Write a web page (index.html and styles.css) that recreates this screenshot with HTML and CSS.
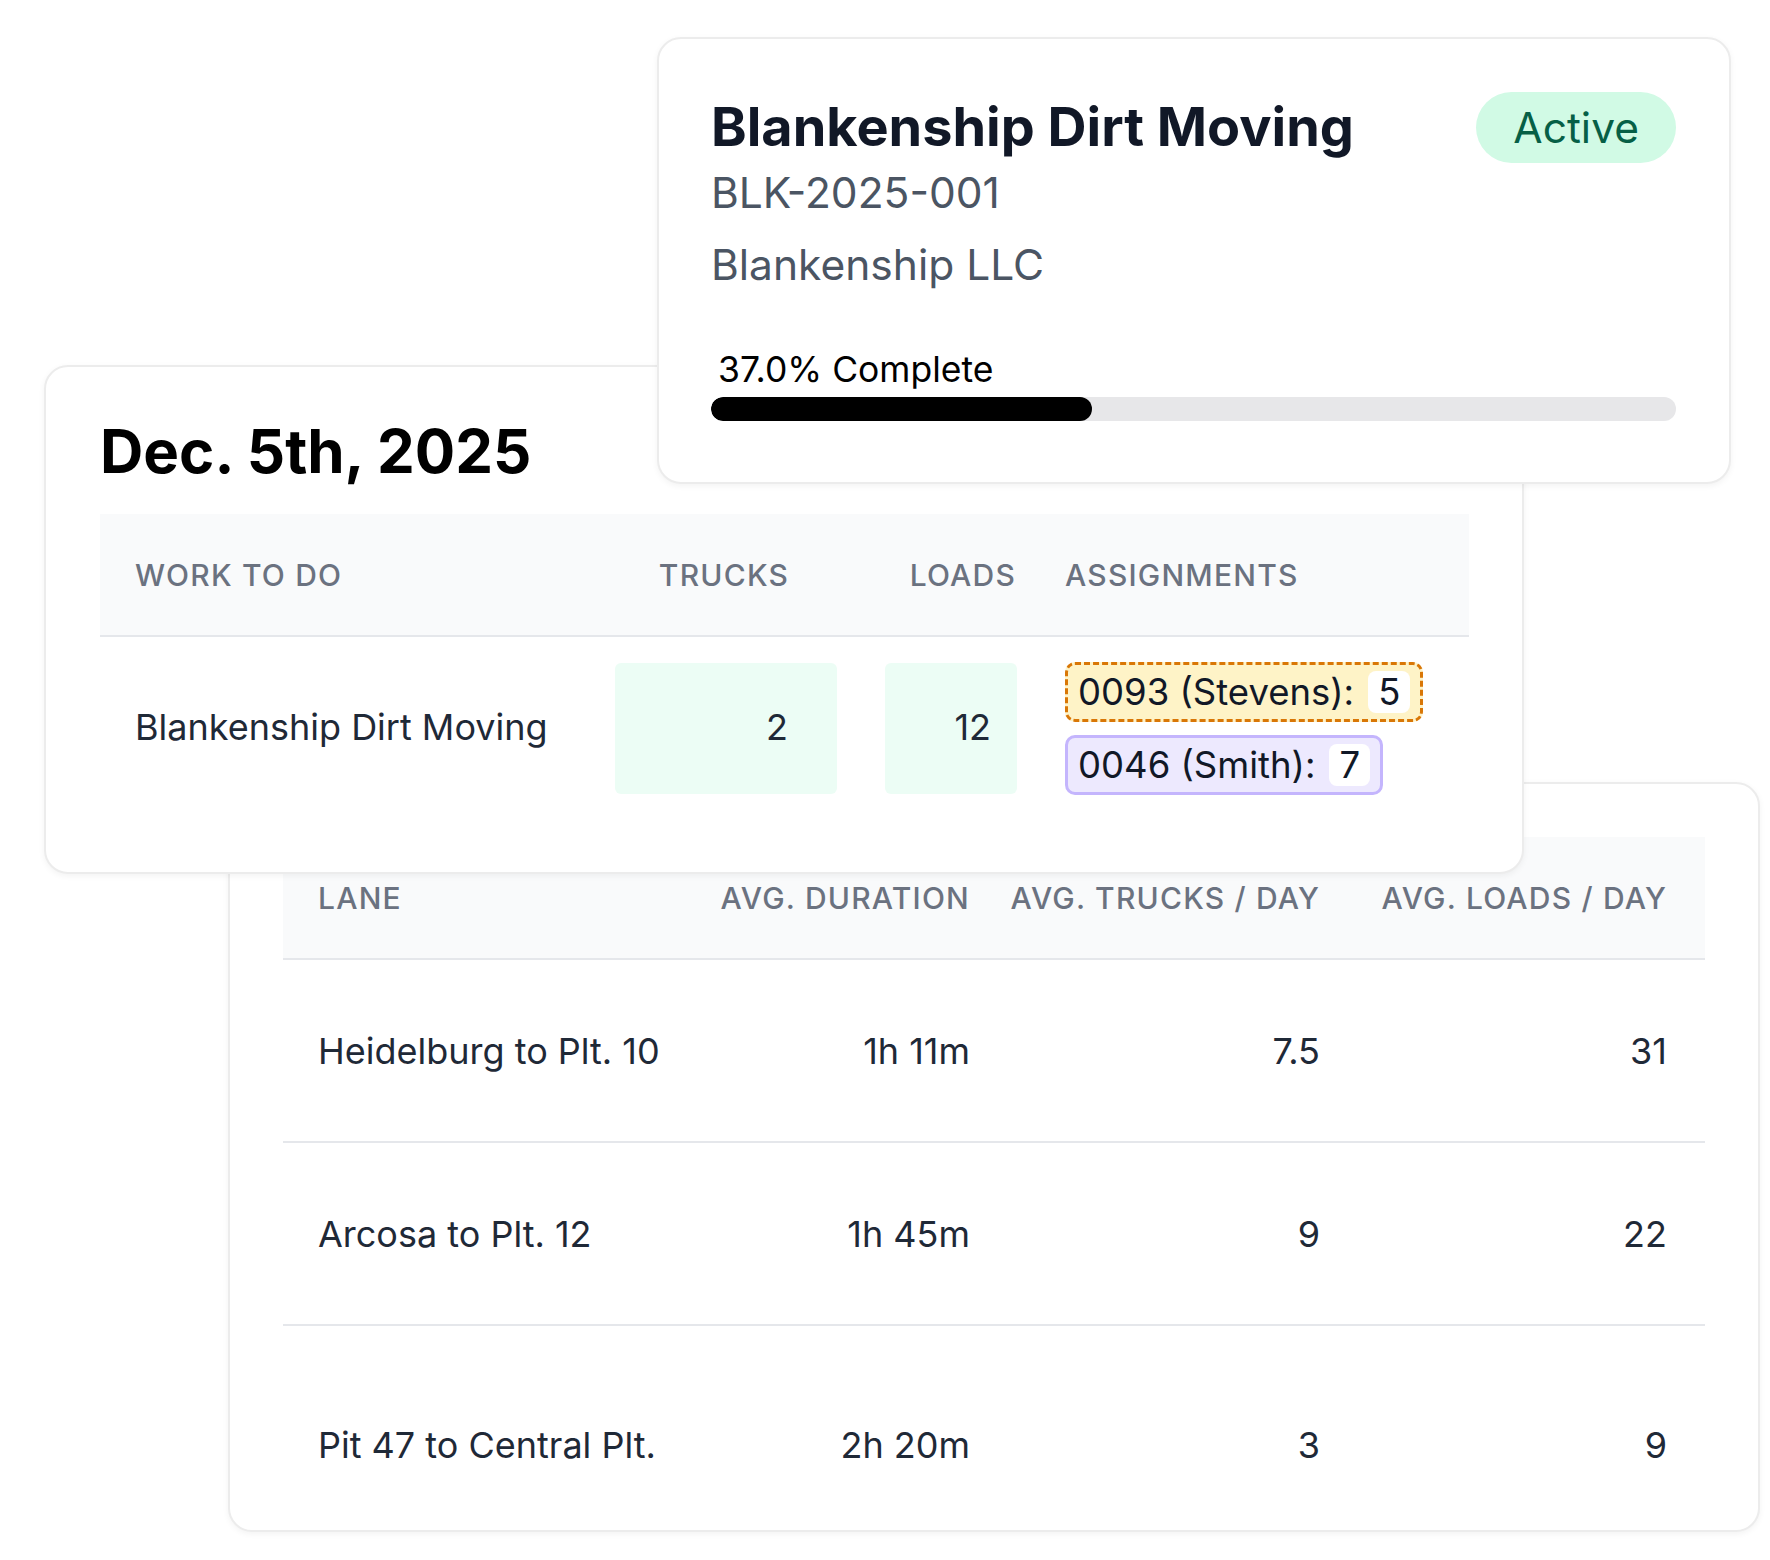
FILE: index.html
```html
<!DOCTYPE html>
<html lang="en">
<head>
<meta charset="utf-8">
<title>Blankenship Dirt Moving</title>
<link rel="stylesheet" href="styles.css">
</head>
<body>
<main class="canvas">

  <section class="card lane-card">
    <div class="lane-table">
      <div class="lane-row lane-head">
        <div class="lane-cell first">Lane</div>
        <div class="lane-cell num">Avg. Duration</div>
        <div class="lane-cell num">Avg. Trucks / Day</div>
        <div class="lane-cell num">Avg. Loads / Day</div>
      </div>
      <div class="lane-row lane-body">
        <div class="lane-cell first">Heidelburg to Plt. 10</div>
        <div class="lane-cell num">1h 11m</div>
        <div class="lane-cell num">7.5</div>
        <div class="lane-cell num">31</div>
      </div>
      <div class="lane-row lane-body">
        <div class="lane-cell first">Arcosa to Plt. 12</div>
        <div class="lane-cell num">1h 45m</div>
        <div class="lane-cell num">9</div>
        <div class="lane-cell num">22</div>
      </div>
      <div class="lane-row lane-body last">
        <div class="lane-cell first">Pit 47 to Central Plt.</div>
        <div class="lane-cell num">2h 20m</div>
        <div class="lane-cell num">3</div>
        <div class="lane-cell num">9</div>
      </div>
    </div>
  </section>

  <section class="card day-card">
    <h2 class="day-title">Dec. 5th, 2025</h2>
    <div class="work-table">
      <div class="work-head">
        <div class="wh wh-work">Work to do</div>
        <div class="wh wh-trucks">Trucks</div>
        <div class="wh wh-loads">Loads</div>
        <div class="wh wh-assign">Assignments</div>
      </div>
      <div class="work-row">
        <div class="work-name">Blankenship Dirt Moving</div>
        <div class="qty qty-trucks">2</div>
        <div class="qty qty-loads">12</div>
        <div class="assignments">
          <div class="tag tag-pending">0093 (Stevens): <span class="tag-count">5</span></div>
          <div class="tag tag-confirmed">0046 (Smith): <span class="tag-count">7</span></div>
        </div>
      </div>
    </div>
  </section>

  <section class="card job-card">
    <div class="job-head">
      <h1 class="job-title">Blankenship Dirt Moving</h1>
      <span class="badge">Active</span>
    </div>
    <div class="job-code">BLK-2025-001</div>
    <div class="job-client">Blankenship LLC</div>
    <div class="progress-label">37.0% Complete</div>
    <div class="progress-track">
      <div class="progress-fill" style="width: 39.5%"></div>
    </div>
  </section>

</main>
</body>
</html>
```

FILE: styles.css
```css
* {
  box-sizing: border-box;
}

html, body {
  margin: 0;
  padding: 0;
  background: #ffffff;
}

body {
  font-family: Inter, "Noto Sans", "Liberation Sans", sans-serif;
  color: #1f2937;
}

.canvas {
  position: relative;
  width: 1770px;
  height: 1560px;
  overflow: hidden;
}

/* ---------- cards ---------- */
.card {
  position: absolute;
  background: #ffffff;
  border: 2px solid #ececec;
  border-radius: 24px;
  box-shadow: 0 2px 6px rgba(0, 0, 0, 0.05);
}

.job-card {
  left: 657px;
  top: 37px;
  width: 1074px;
  height: 447px;
  padding: 53px 53px 0 52px;
  z-index: 3;
}

.day-card {
  left: 44px;
  top: 365px;
  width: 1480px;
  height: 509px;
  padding: 54px 53px 0 54px;
  z-index: 2;
}

.lane-card {
  left: 228px;
  top: 782px;
  width: 1532px;
  height: 750px;
  padding: 53px 53px 0 53px;
  overflow: hidden;
  z-index: 1;
}

/* ---------- job card ---------- */
.job-head {
  display: flex;
  align-items: center;
  justify-content: space-between;
}

.job-title {
  margin: 0;
  font-size: 54px;
  line-height: 1.2;
  font-weight: 700;
  color: #111827;
}

.badge {
  display: inline-flex;
  align-items: center;
  height: 71px;
  padding: 0 37px;
  border-radius: 999px;
  background: #d1fae5;
  color: #065f46;
  font-size: 42.5px;
  font-weight: 400;
}

.job-code {
  margin-top: 5px;
  font-size: 42.5px;
  line-height: 50px;
  color: #4b5563;
}

.job-client {
  margin-top: 22px;
  font-size: 42.5px;
  line-height: 50px;
  color: #4b5563;
}

.progress-label {
  margin-top: 59px;
  padding-left: 7px;
  font-size: 35.5px;
  line-height: 42px;
  color: #000000;
}

.progress-track {
  margin-top: 6px;
  height: 24px;
  border-radius: 12px;
  background: #e7e7e9;
  overflow: hidden;
}

.progress-fill {
  height: 100%;
  border-radius: 12px;
  background: #000000;
}

/* ---------- day card ---------- */
.day-title {
  margin: 0;
  font-size: 60px;
  line-height: 1;
  font-weight: 700;
  color: #000000;
}

.work-table {
  margin-top: 33px;
}

.work-head,
.work-row {
  display: grid;
  grid-template-columns: 467px 222px 132px 1fr;
  column-gap: 48px;
}

.work-head {
  height: 123px;
  align-items: center;
  background: #f9fafb;
  border-bottom: 2px solid #e5e7eb;
}

.wh {
  font-size: 30px;
  line-height: 1;
  font-weight: 500;
  letter-spacing: 0.04em;
  text-transform: uppercase;
  color: #6b7280;
}

.wh-work {
  padding-left: 35px;
}

.wh-trucks {
  text-align: right;
  padding-right: 48px;
}

.wh-loads {
  text-align: right;
  margin-right: 1px;
}

.wh-assign {
  padding-left: 0;
}

.work-row {
  padding: 25px 0;
  align-items: center;
}

.work-name {
  padding-left: 35px;
  font-size: 36px;
  color: #1f2937;
  margin-top: -3px;
}

.qty {
  height: 131px;
  display: flex;
  align-items: center;
  justify-content: flex-end;
  background: #ecfdf5;
  border-radius: 6px;
  font-size: 36px;
  color: #1f2937;
  padding-bottom: 3px;
}

.qty-trucks {
  padding-right: 49px;
}

.qty-loads {
  padding-right: 26px;
}

.assignments {
  display: flex;
  flex-direction: column;
  align-items: flex-start;
  gap: 13px;
}

.tag {
  display: inline-flex;
  align-items: center;
  gap: 14px;
  padding: 6px 10px 6px 10px;
  border-radius: 10px;
  font-size: 36.5px;
  line-height: 42px;
  color: #111827;
  white-space: nowrap;
}

.tag-pending {
  background: #fef3c7;
  border: 3px dashed #d97706;
}

.tag-confirmed {
  background: #ede9fe;
  border: 3px solid #c4b5fd;
}

.tag-count {
  display: inline-block;
  min-width: 41px;
  height: 42px;
  padding: 0 10px;
  border-radius: 8px;
  background: #ffffff;
  text-align: center;
}

/* ---------- lane card ---------- */
.lane-row {
  display: grid;
  grid-template-columns: 1fr 324px 350px 349px;
  align-items: center;
}

.lane-head {
  height: 123px;
  background: #f9fafb;
  border-bottom: 2px solid #e5e7eb;
}

.lane-head .lane-cell {
  font-size: 30px;
  line-height: 1;
  font-weight: 500;
  letter-spacing: 0.04em;
  text-transform: uppercase;
  color: #6b7280;
}

.lane-cell {
  white-space: nowrap;
}

.lane-cell.first {
  padding-left: 35px;
}

.lane-cell.num {
  text-align: right;
  padding-right: 36px;
}

.lane-cell.num:last-child {
  padding-right: 38px;
}

.lane-body {
  height: 183px;
  border-bottom: 2px solid #e5e7eb;
  font-size: 36px;
  color: #1f2937;
}

.lane-body.last {
  height: 238px;
  border-bottom: none;
}
```
